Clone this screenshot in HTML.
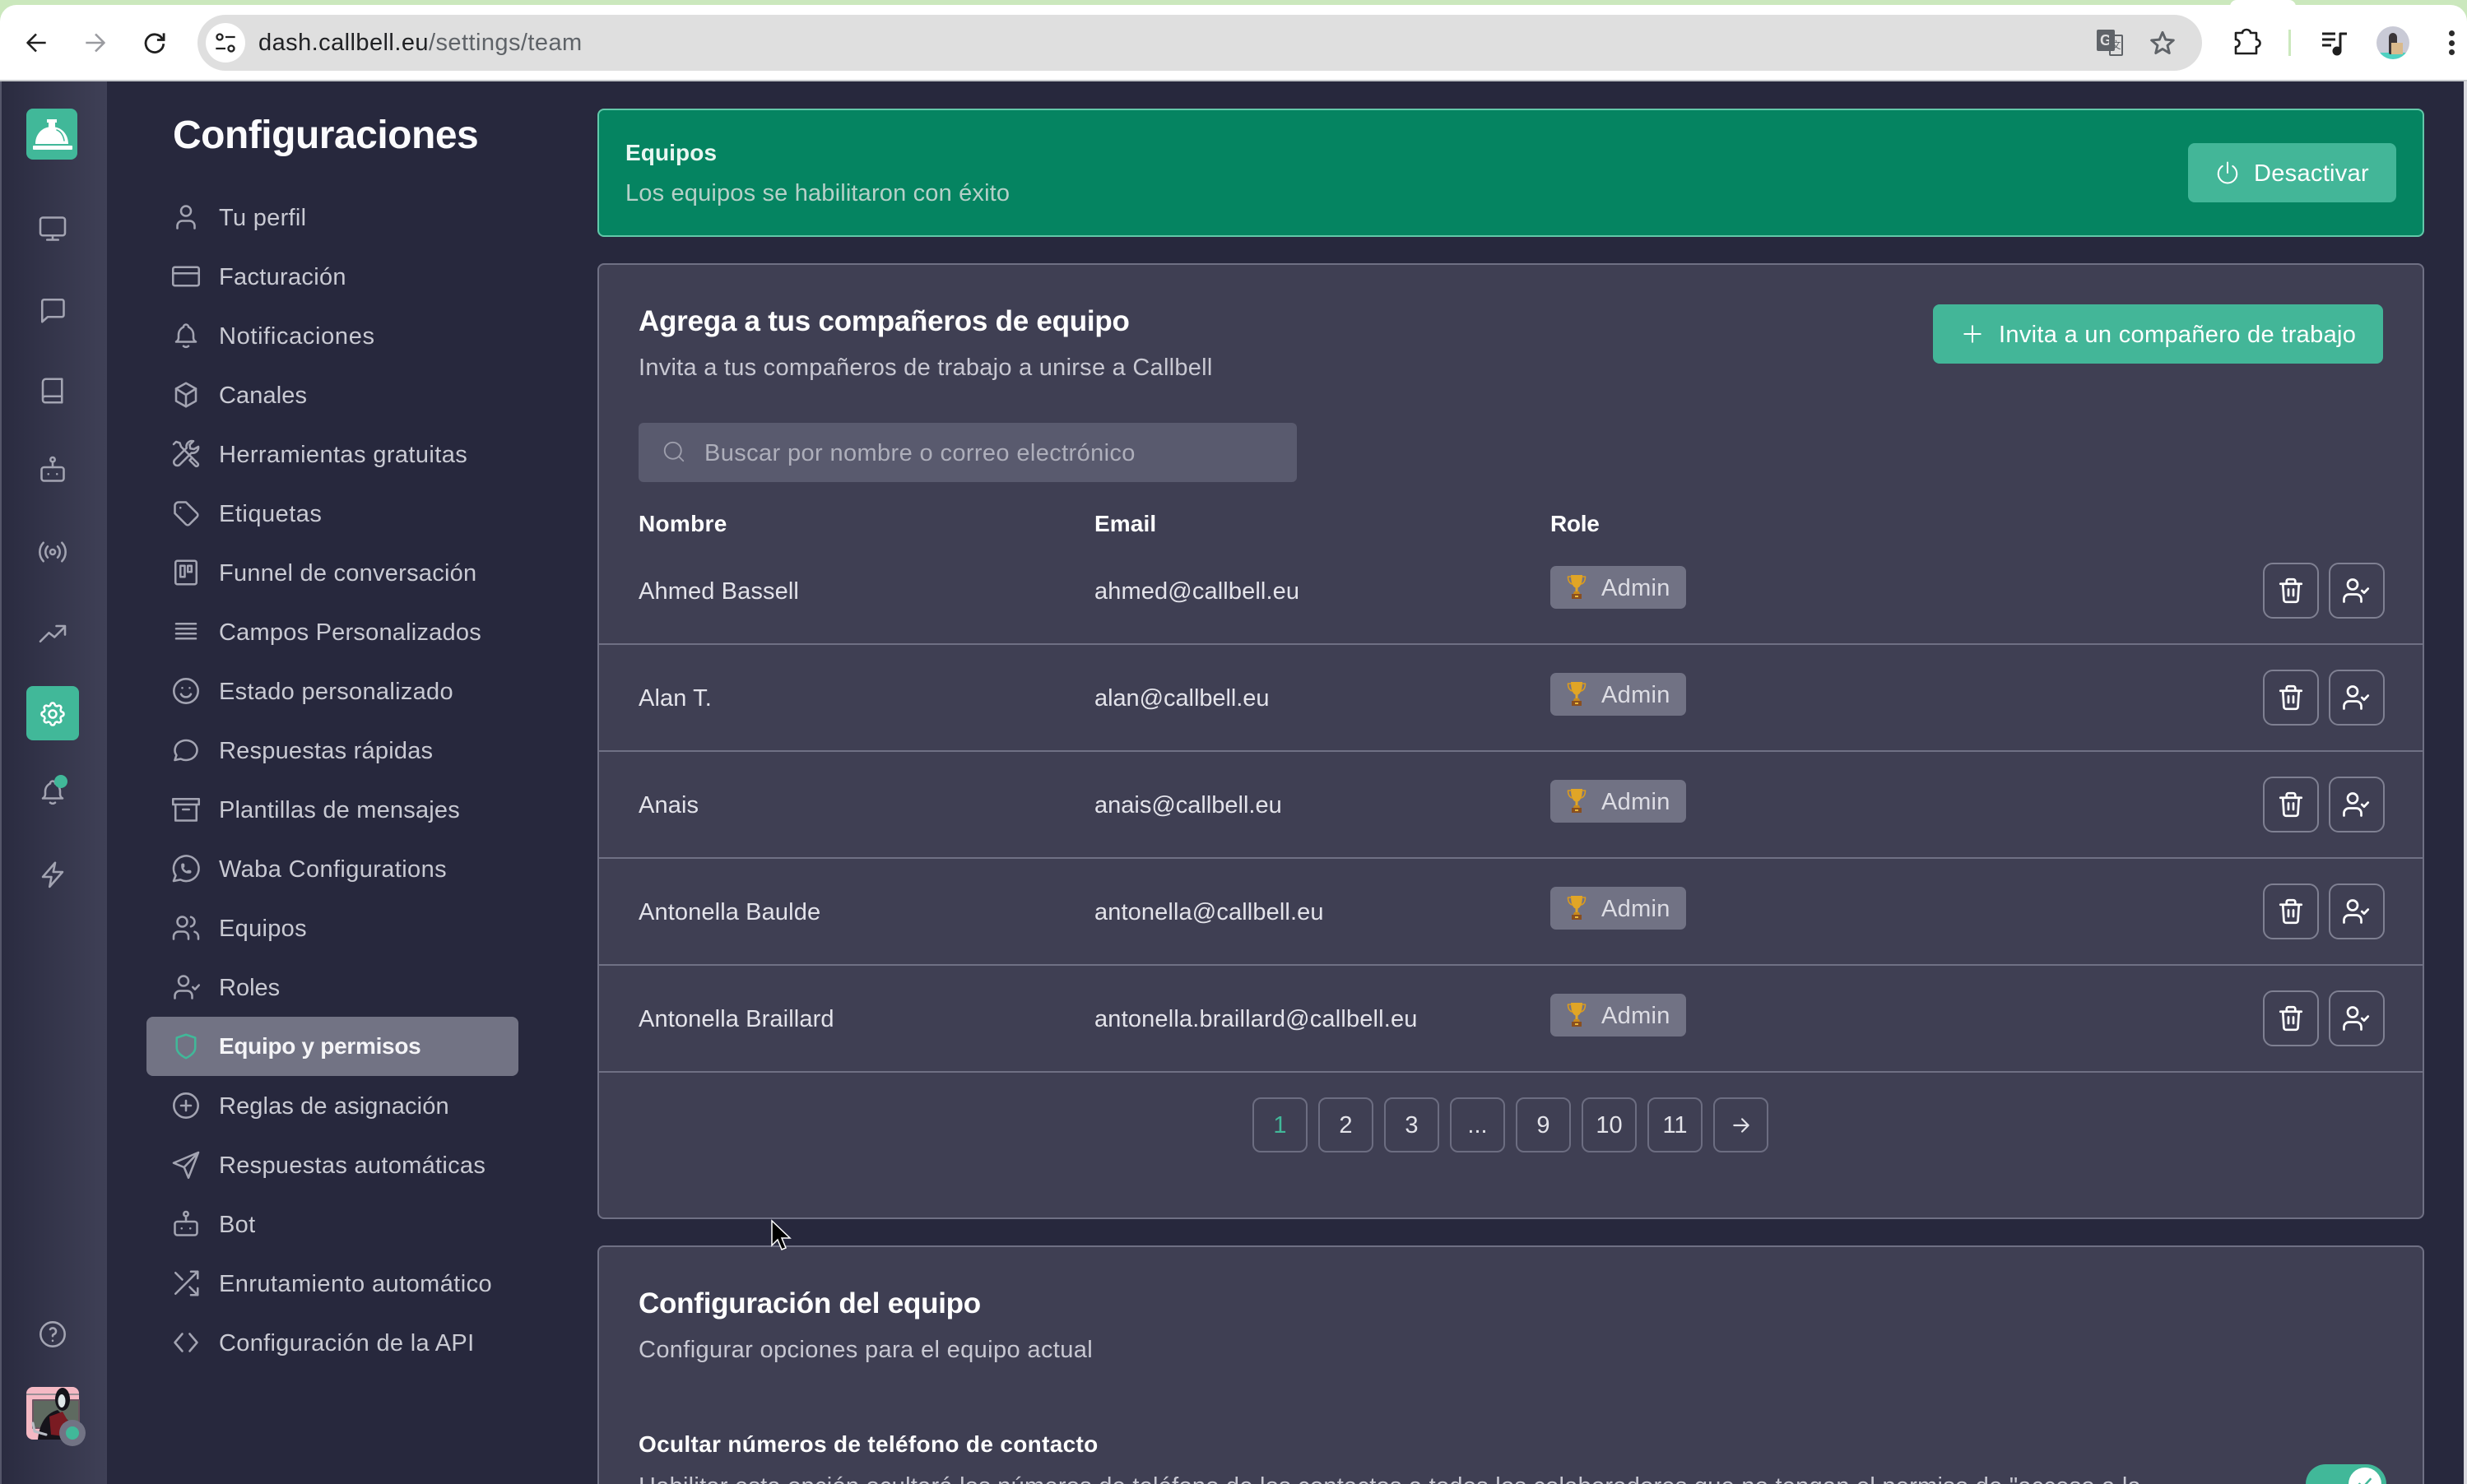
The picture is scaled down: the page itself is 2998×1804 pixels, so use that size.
<!DOCTYPE html>
<html lang="es"><head><meta charset="utf-8"><title>Callbell</title>
<style>
*{box-sizing:border-box}
html,body{margin:0;padding:0;width:2998px;height:1804px;overflow:hidden}
#root{width:2998px;height:1804px;position:relative;overflow:hidden;background:#cbe8bd;font-family:"Liberation Sans",sans-serif;color:#fff}
.t{position:absolute;white-space:nowrap;line-height:40px;font-size:29px;letter-spacing:.3px;margin-top:1px}
.a{position:absolute}
svg{position:absolute;fill:none;stroke:currentColor;stroke-width:1.7;stroke-linecap:round;stroke-linejoin:round;overflow:visible}
.s{color:#c9cad3;left:266px}
.si{color:#a3a4b2;left:208px;width:36px;height:36px}
.ri{color:#a3a4b2;left:46px;width:36px;height:36px;stroke-width:1.7}
.card{position:absolute;left:726px;width:2220px;background:#3f3f53;border:2px solid #6f7084;border-radius:8px}
.hr{position:absolute;left:728px;width:2216px;height:2px;background:#6f7084}
.b{font-weight:700;font-size:28px;letter-spacing:.1px}
.badge{position:absolute;left:1884px;width:165px;height:52px;background:#717284;border-radius:7px}
.btn{position:absolute;width:68px;height:68px;border:2px solid #7f8092;border-radius:12px;color:#fff}
.btn svg{left:14px;top:14px;width:36px;height:36px;stroke-width:1.8}
.btn.u svg{left:12px}
.pg{position:absolute;top:1334px;width:67px;height:67px;border:2px solid #6c6d81;border-radius:10px;display:flex;align-items:center;justify-content:center;font-size:29px;color:#e4e4ea;padding-top:2px}
.cell{color:#e3e3ea;letter-spacing:.12px}
</style></head><body><div id="root">
<svg width="0" height="0" style="position:absolute"><defs>
<symbol id="user" viewBox="0 0 24 24"><circle cx="12" cy="7" r="4"/><path d="M5 21v-2a4 4 0 0 1 4-4h6a4 4 0 0 1 4 4v2"/></symbol>
<symbol id="card" viewBox="0 0 24 24"><rect x="1.500" y="4.500" width="21" height="15" rx="1.500"/><path d="M1.500 9.500h21"/></symbol>
<symbol id="bell" viewBox="0 0 24 24"><path d="M10 5a2 2 0 1 1 4 0a7 7 0 0 1 4 6v3a4 4 0 0 0 2 3h-16a4 4 0 0 0 2-3v-3a7 7 0 0 1 4-6"/><path d="M10 20.500q2 1.500 4 0"/></symbol>
<symbol id="box" viewBox="0 0 24 24"><path d="M12 2.500l8 4.500v10l-8 4.500l-8-4.500v-10z"/><path d="M12 12l8-5M12 12v9.500M12 12l-8-5"/></symbol>
<symbol id="tools" viewBox="0 0 24 24"><path d="M2 4l2-2 3 1 1 3 9 9"/><path d="M15 17l2-2 4.500 4.500a1.400 1.400 0 0 1-2 2z"/><path d="M22 6a4.500 4.500 0 0 1-5.500 5L7 20.500a2.800 2.800 0 0 1-4-4L12.500 7a4.500 4.500 0 0 1 5.500-5.500l-3 3 .5 3 3 .5z"/></symbol>
<symbol id="tag" viewBox="0 0 24 24"><path d="M6 3h6l9 9a2 2 0 0 1 0 2.800l-6.200 6.200a2 2 0 0 1-2.800 0l-9-9v-6a3 3 0 0 1 3-3z"/><path d="M7.500 7.500v.01"/></symbol>
<symbol id="kan" viewBox="0 0 24 24"><rect x="3.500" y="2.500" width="17" height="19" rx="1.500"/><rect x="7.500" y="6.500" width="3.500" height="9"/><rect x="13.500" y="6.500" width="3" height="5"/></symbol>
<symbol id="lines" viewBox="0 0 24 24"><path d="M4 5.500h16M4 9.500h16M4 13.500h16M4 17.500h16"/></symbol>
<symbol id="smile" viewBox="0 0 24 24"><circle cx="12" cy="12" r="9.800"/><path d="M9 9.500v.01M15 9.500v.01M8 14.500a4.500 4.500 0 0 0 8 0"/></symbol>
<symbol id="msg" viewBox="0 0 24 24"><path d="M3 20l1.300-3.900c-2.324-3.437-1.426-7.872 2.100-10.374c3.526-2.501 8.590-2.296 11.845.48c3.255 2.777 3.695 7.266 1.029 10.501c-2.666 3.235-7.615 4.215-11.574 2.293l-4.700 1"/></symbol>
<symbol id="arch" viewBox="0 0 24 24"><path d="M1.500 3.500h21v4.500h-21zM3.500 8v13h17v-13M9.500 12h5"/></symbol>
<symbol id="wa" viewBox="0 0 24 24"><path d="M2 22l1.700-4.500a10.200 10.200 0 1 1 3.800 3.400l-5.500 1.100"/><path d="M9 10a.5.5 0 0 0 1 0v-1a.5.5 0 0 0-1 0v1a5 5 0 0 0 5 5h1a.5.5 0 0 0 0-1h-1a.5.5 0 0 0 0 1"/></symbol>
<symbol id="users" viewBox="0 0 24 24"><circle cx="9" cy="7" r="4"/><path d="M2 21v-2a4 4 0 0 1 4-4h4a4 4 0 0 1 4 4v2M16 3.130a4 4 0 0 1 0 7.750M22 21v-2a4 4 0 0 0-3-3.850"/></symbol>
<symbol id="ucheck" viewBox="0 0 24 24"><circle cx="10" cy="7" r="4"/><path d="M3 21v-2a4 4 0 0 1 4-4h6a4 4 0 0 1 4 4v2M17.500 12l1.800 1.800 3.200-3.400"/></symbol>
<symbol id="shield" viewBox="0 0 24 24"><path d="M12 2.500l7.500 2.500v8c0 4-3.500 6.500-7.500 8.500c-4-2-7.500-4.500-7.500-8.500v-8z"/></symbol>
<symbol id="plusc" viewBox="0 0 24 24"><circle cx="12" cy="12" r="9.800"/><path d="M12 8v8M8 12h8"/></symbol>
<symbol id="send" viewBox="0 0 24 24"><path d="M22 2L2 10.500l8.500 3.500L14 22.500zM22 2L10.500 14"/></symbol>
<symbol id="bot" viewBox="0 0 24 24"><circle cx="12" cy="3.800" r="1.800"/><path d="M12 5.600V10"/><rect x="3" y="10" width="18" height="11" rx="2"/><path d="M8.500 15.500v.01M15.500 15.500v.01"/></symbol>
<symbol id="shuf" viewBox="0 0 24 24"><path d="M16 2.500h5.500V8M3.500 20.500L21.500 2.500M21.500 16v5.500H16M15 15l6.500 6.500M3.500 3.500l5.500 5.500"/></symbol>
<symbol id="code" viewBox="0 0 24 24"><path d="M9 5l-6 7 6 7M15 5l6 7-6 7"/></symbol>
<symbol id="mon" viewBox="0 0 24 24"><rect x="2" y="3" width="20" height="14.500" rx="2"/><path d="M12 17.500v3.500M7.500 21h9"/></symbol>
<symbol id="chat" viewBox="0 0 24 24"><path d="M5 3.500h14.500a1.500 1.500 0 0 1 1.500 1.500v11a1.500 1.500 0 0 1-1.500 1.500H8l-4.500 4V5A1.500 1.500 0 0 1 5 3.500z"/></symbol>
<symbol id="book" viewBox="0 0 24 24"><path d="M6.500 2.500h13v19H6a2 2 0 0 1-2-2V5a2.500 2.500 0 0 1 2.500-2.500zM4 18a1.800 1.800 0 0 1 2-1.500h13.500"/></symbol>
<symbol id="cast" viewBox="0 0 24 24"><circle cx="12" cy="12" r="2"/><path d="M8 7.500a6.500 6.500 0 0 0 0 9M16 7.500a6.500 6.500 0 0 1 0 9M4.500 4.500a11 11 0 0 0 0 15M19.500 4.500a11 11 0 0 1 0 15"/></symbol>
<symbol id="trend" viewBox="0 0 24 24"><path d="M2 18.500l7-7 4.500 3.500 8.500-8.500M15 6h7v7"/></symbol>
<symbol id="gear" viewBox="0 0 24 24"><path d="M10.325 4.317c.426-1.756 2.924-1.756 3.350 0a1.724 1.724 0 0 0 2.573 1.066c1.543-.94 3.310.826 2.370 2.370a1.724 1.724 0 0 0 1.065 2.572c1.756.426 1.756 2.924 0 3.350a1.724 1.724 0 0 0-1.066 2.573c.94 1.543-.826 3.310-2.370 2.370a1.724 1.724 0 0 0-2.572 1.065c-.426 1.756-2.924 1.756-3.350 0a1.724 1.724 0 0 0-2.573-1.066c-1.543.94-3.310-.826-2.370-2.370a1.724 1.724 0 0 0-1.065-2.572c-1.756-.426-1.756-2.924 0-3.350a1.724 1.724 0 0 0 1.066-2.573c-.94-1.543.826-3.310 2.370-2.370c1 .608 2.296.07 2.572-1.065z"/><circle cx="12" cy="12" r="3"/></symbol>
<symbol id="bolt" viewBox="0 0 24 24"><path d="M14 2.500L4 14h7l-1.500 8L20 10h-7.500z"/></symbol>
<symbol id="help" viewBox="0 0 24 24"><circle cx="12" cy="12" r="9.800"/><path d="M12 17.200v.01M12 13.500a1.500 1.500 0 0 1 1-1.500a2.600 2.600 0 1 0-3-4"/></symbol>
<symbol id="trash" viewBox="0 0 24 24"><path d="M3.500 6.500h17M5.500 6.500l.8 13a1.800 1.800 0 0 0 1.800 1.700h7.800a1.800 1.800 0 0 0 1.800-1.700l.8-13M8.500 6.500V4.300A1.500 1.500 0 0 1 10 2.800h4a1.500 1.500 0 0 1 1.500 1.500v2.200M10 11v5M14 11v5"/></symbol>
<symbol id="search" viewBox="0 0 24 24"><circle cx="11" cy="11" r="8"/><path d="M21 21l-4.300-4.300"/></symbol>
<symbol id="power" viewBox="0 0 24 24"><path d="M12 2v10M7 5.500a9 9 0 1 0 10 0"/></symbol>
<symbol id="arrow" viewBox="0 0 24 24"><path d="M4 12h16M13 5l7 7-7 7"/></symbol>
<symbol id="plus" viewBox="0 0 24 24"><path d="M12 3v18M3 12h18"/></symbol>
<symbol id="trophy" viewBox="0 0 24 32"><path d="M5 1h14c0 9-2 14-5.500 15.500v5h-3v-5C7 15 5 10 5 1z" fill="#e0a526" stroke="none"/><path d="M5 3H1.500c0 5 2 8 5 9M19 3h3.500c0 5-2 8-5 9" stroke="#d99a20" stroke-width="1.600"/><path d="M9 21h6l1 3H8z" fill="#c98a1c" stroke="none"/><path d="M6 24h12v6H6z" fill="#8a4f1f" stroke="none"/><path d="M10 26h4v2h-4z" fill="#e8b93a" stroke="none"/></symbol>
</defs></svg>

<!-- browser chrome -->
<div class="a" style="left:0;top:6px;width:2998px;height:93px;background:#fff;border-radius:20px 20px 0 0"></div>
<div class="a" style="left:2710px;top:0;width:80px;height:8px;background:#fff;border-radius:14px 14px 0 0"></div>
<div class="a" style="left:0;top:97px;width:2998px;height:2px;background:#c6c8cc"></div>
<svg style="left:30px;top:38px;width:28px;height:28px;color:#1f1f1f;stroke-width:2.200;stroke-linecap:butt" viewBox="0 0 24 24"><path d="M22 12H3M12 3l-9 9 9 9"/></svg>
<svg style="left:102px;top:38px;width:28px;height:28px;color:#9a9ba0;stroke-width:2.200;stroke-linecap:butt" viewBox="0 0 24 24"><path d="M2 12h19M12 3l9 9-9 9"/></svg>
<svg style="left:174px;top:38px;width:28px;height:28px;color:#1f1f1f;stroke-width:2.400;stroke-linecap:butt" viewBox="0 0 24 24"><path d="M20 8a9.300 9.300 0 1 0 1.200 5"/><path d="M21.500 2v7h-7" stroke-linejoin="miter"/></svg>
<div class="a" style="left:240px;top:18px;width:2436px;height:68px;background:#dfdfdf;border-radius:34px"></div>
<div class="a" style="left:250px;top:28px;width:48px;height:48px;background:#fff;border-radius:24px"></div>
<svg style="left:260px;top:38px;width:28px;height:28px;color:#222;stroke-width:2;stroke-linecap:butt" viewBox="0 0 24 24"><circle cx="6" cy="6" r="3"/><path d="M12 6h10M2 18h10"/><circle cx="18" cy="18" r="3"/></svg>
<div class="t" style="left:314px;top:31px;color:#202124;letter-spacing:.44px">dash.callbell.eu<span style="color:#5f6368">/settings/team</span></div>
<!-- translate -->
<div class="a" style="left:2548px;top:36px;width:22px;height:26px;background:#5f6368;border-radius:2px;font-size:18px;font-weight:700;line-height:26px;text-align:center;color:#dfdfdf">G</div>
<div class="a" style="left:2563px;top:42px;width:17px;height:26px;border:2px solid #5f6368;border-radius:2px;font-size:12px;line-height:22px;text-align:center;color:#5f6368;font-family:'Noto Sans CJK SC',sans-serif">文</div>
<svg style="left:2612px;top:36px;width:32px;height:32px;color:#5f6368;stroke-width:2.200;stroke-linecap:butt" viewBox="0 0 24 24"><path d="M12 2.500l2.800 6.600 7.200.6-5.500 4.700 1.700 7-6.200-3.800-6.200 3.800 1.700-7L2 9.700l7.200-.6z"/></svg>
<svg style="left:2712px;top:34px;width:36px;height:34px;color:#1f1f1f;stroke-width:2.600;stroke-linecap:butt" viewBox="0 0 36 34"><path d="M5 6h8a5 4 0 0 1 10 0h7v8a4.500 4.500 0 0 1 0 9v8H5v-8a4.500 4.500 0 0 0 0-9z"/></svg>
<div class="a" style="left:2781px;top:36px;width:3px;height:32px;background:#cbe8bd"></div>
<svg style="left:2822px;top:38px;width:30px;height:28px;color:#1f1f1f;stroke-width:3;stroke-linecap:butt" viewBox="0 0 30 28"><path d="M0 3h16M0 10h16M0 17h11M22 24V3h8"/><circle cx="18" cy="24" r="4" fill="#1f1f1f"/></svg>
<div class="a" style="left:2888px;top:32px;width:40px;height:40px;border-radius:20px;background:linear-gradient(#c9cad6 0 80%,#4fd1c1 80%);overflow:hidden"><div class="a" style="left:15px;top:8px;width:10px;height:26px;background:#3a3538;border-radius:5px 5px 2px 2px"></div><div class="a" style="left:18px;top:20px;width:14px;height:14px;background:#d9b98c"></div></div>
<div class="a" style="left:2976px;top:37px;width:7px;height:7px;background:#2b2b2b;border-radius:50%"></div>
<div class="a" style="left:2976px;top:49px;width:7px;height:7px;background:#2b2b2b;border-radius:50%"></div>
<div class="a" style="left:2976px;top:60px;width:7px;height:7px;background:#2b2b2b;border-radius:50%"></div>

<!-- app background -->
<div class="a" style="left:0;top:99px;width:2998px;height:1705px;background:#27283d"></div>
<div class="a" style="left:2994px;top:99px;width:4px;height:1705px;background:#d9d9de"></div>
<div class="a" style="left:0;top:99px;width:2px;height:1705px;background:#55566a"></div>
<div class="a" style="left:2px;top:99px;width:128px;height:1705px;background:linear-gradient(90deg,#2a2b40,#3f4056)"></div>

<!-- rail -->
<div class="a" style="left:32px;top:132px;width:62px;height:62px;background:#41b899;border-radius:8px"></div>
<svg style="left:32px;top:132px;width:62px;height:62px" viewBox="0 0 62 62"><path d="M11 43c0-11 7-19 16-20.500V17h-2v-4h12v4h-2v5.500C44 24 51 32 51 43z" fill="#fff" stroke="none"/><rect x="8" y="45" width="48" height="5" rx="1" fill="#fff" stroke="none"/><path d="M37 26c5 2 8 7 9 13" stroke="#41b899" stroke-width="1.500"/></svg>
<svg class="ri" style="top:260px"><use href="#mon"/></svg>
<svg class="ri" style="top:359px"><use href="#chat"/></svg>
<svg class="ri" style="top:457px"><use href="#book"/></svg>
<svg class="ri" style="top:553px"><use href="#bot"/></svg>
<svg class="ri" style="top:653px"><use href="#cast"/></svg>
<svg class="ri" style="top:752px"><use href="#trend"/></svg>
<div class="a" style="left:32px;top:834px;width:64px;height:66px;background:#41b899;border-radius:8px"></div>
<svg class="ri" style="top:850px;color:#fff"><use href="#gear"/></svg>
<svg class="ri" style="top:945px"><use href="#bell"/></svg>
<div class="a" style="left:66px;top:942px;width:16px;height:16px;background:#41b899;border-radius:50%"></div>
<svg class="ri" style="top:1045px"><use href="#bolt"/></svg>
<svg class="ri" style="top:1604px"><use href="#help"/></svg>
<!-- avatar -->
<svg style="left:32px;top:1686px;width:64px;height:64px;stroke:none" viewBox="0 0 64 64"><rect width="64" height="64" rx="8" fill="#f5b9c4"/><rect x="0" y="8" width="64" height="2" fill="#9a8f96"/><rect x="8" y="16" width="56" height="34" fill="#5e6a60" stroke="#6a5560" stroke-width="2"/><path d="M14 64c2-20 10-32 24-36l14 14-6 22z" fill="#15131a"/><path d="M28 36l16-6 8 14-6 16-16-2z" fill="#7a1b22"/><ellipse cx="44" cy="15" rx="9" ry="14" fill="#15131a"/><ellipse cx="43" cy="17" rx="4.500" ry="8" fill="#dfe6e8"/><path d="M8 44l2 10 14 4" fill="none" stroke="#b8bcc4" stroke-width="3"/></svg>
<div class="a" style="left:72px;top:1726px;width:32px;height:32px;background:#727384;border-radius:50%"></div>
<div class="a" style="left:80px;top:1734px;width:16px;height:16px;background:#41b899;border-radius:50%"></div>

<!-- sidebar -->
<div class="t" style="left:210px;top:144px;font-size:48px;font-weight:700;letter-spacing:-.5px;line-height:40px;color:#fbfbfd">Configuraciones</div>
<svg class="si" style="top:246px"><use href="#user"/></svg><div class="t s" style="top:244px">Tu perfil</div>
<svg class="si" style="top:318px"><use href="#card"/></svg><div class="t s" style="top:316px">Facturación</div>
<svg class="si" style="top:390px"><use href="#bell"/></svg><div class="t s" style="top:388px;letter-spacing:.65px">Notificaciones</div>
<svg class="si" style="top:462px"><use href="#box"/></svg><div class="t s" style="top:460px;letter-spacing:.1px">Canales</div>
<svg class="si" style="top:534px"><use href="#tools"/></svg><div class="t s" style="top:532px;letter-spacing:.4px">Herramientas gratuitas</div>
<svg class="si" style="top:606px"><use href="#tag"/></svg><div class="t s" style="top:604px;letter-spacing:.5px">Etiquetas</div>
<svg class="si" style="top:678px"><use href="#kan"/></svg><div class="t s" style="top:676px;letter-spacing:.25px">Funnel de conversación</div>
<svg class="si" style="top:750px"><use href="#lines"/></svg><div class="t s" style="top:748px;letter-spacing:.22px">Campos Personalizados</div>
<svg class="si" style="top:822px"><use href="#smile"/></svg><div class="t s" style="top:820px;letter-spacing:.3px">Estado personalizado</div>
<svg class="si" style="top:894px"><use href="#msg"/></svg><div class="t s" style="top:892px;letter-spacing:.22px">Respuestas rápidas</div>
<svg class="si" style="top:966px"><use href="#arch"/></svg><div class="t s" style="top:964px;letter-spacing:.2px">Plantillas de mensajes</div>
<svg class="si" style="top:1038px"><use href="#wa"/></svg><div class="t s" style="top:1036px;letter-spacing:.38px">Waba Configurations</div>
<svg class="si" style="top:1110px"><use href="#users"/></svg><div class="t s" style="top:1108px">Equipos</div>
<svg class="si" style="top:1182px"><use href="#ucheck"/></svg><div class="t s" style="top:1180px;letter-spacing:0">Roles</div>
<div class="a" style="left:178px;top:1236px;width:452px;height:72px;background:#727384;border-radius:8px"></div>
<svg class="si" style="top:1254px;color:#41b899"><use href="#shield"/></svg><div class="t" style="left:266px;top:1251px;font-size:28px;font-weight:700;letter-spacing:-.3px;color:#f4f4f7">Equipo y permisos</div>
<svg class="si" style="top:1326px"><use href="#plusc"/></svg><div class="t s" style="top:1324px;letter-spacing:.12px">Reglas de asignación</div>
<svg class="si" style="top:1398px"><use href="#send"/></svg><div class="t s" style="top:1396px">Respuestas automáticas</div>
<svg class="si" style="top:1470px"><use href="#bot"/></svg><div class="t s" style="top:1468px">Bot</div>
<svg class="si" style="top:1542px"><use href="#shuf"/></svg><div class="t s" style="top:1540px;letter-spacing:.42px">Enrutamiento automático</div>
<svg class="si" style="top:1614px"><use href="#code"/></svg><div class="t s" style="top:1612px;letter-spacing:.32px">Configuración de la API</div>

<!-- alert -->
<div class="a" style="left:726px;top:132px;width:2220px;height:156px;background:#058461;border:2px solid #62c8a9;border-radius:8px"></div>
<div class="t b" style="left:760px;top:165px;color:#e9f6f1">Equipos</div>
<div class="t" style="left:760px;top:214px;color:#b6d0c8;letter-spacing:.17px">Los equipos se habilitaron con éxito</div>
<div class="a" style="left:2659px;top:174px;width:253px;height:72px;background:#43b698;border-radius:8px"></div>
<svg style="left:2692px;top:195px;width:30px;height:30px;color:#fff;stroke-width:1.600" viewBox="0 0 24 24"><use href="#power"/></svg>
<div class="t" style="left:2739px;top:190px;color:#fff">Desactivar</div>

<!-- team card -->
<div class="card" style="top:320px;height:1162px"></div>
<div class="t" style="left:776px;top:370px;font-size:35px;font-weight:700;letter-spacing:-.25px">Agrega a tus compañeros de equipo</div>
<div class="t" style="left:776px;top:426px;color:#c8c8d2;letter-spacing:.26px">Invita a tus compañeros de trabajo a unirse a Callbell</div>
<div class="a" style="left:2349px;top:370px;width:547px;height:72px;background:#43b698;border-radius:8px"></div>
<svg style="left:2384px;top:393px;width:26px;height:26px;color:#fff;stroke-width:1.800" viewBox="0 0 24 24"><use href="#plus"/></svg>
<div class="t" style="left:2429px;top:386px;color:#fff;letter-spacing:.32px">Invita a un compañero de trabajo</div>
<div class="a" style="left:776px;top:514px;width:800px;height:72px;background:#595a6e;border-radius:6px"></div>
<svg style="left:804px;top:534px;width:30px;height:30px;color:#9d9eac;stroke-width:1.500" viewBox="0 0 24 24"><use href="#search"/></svg>
<div class="t" style="left:856px;top:530px;color:#aeafbb;letter-spacing:.38px">Buscar por nombre o correo electrónico</div>
<div class="t b" style="left:776px;top:616px;letter-spacing:.3px">Nombre</div>
<div class="t b" style="left:1330px;top:616px">Email</div>
<div class="t b" style="left:1884px;top:616px;letter-spacing:-.3px">Role</div>

<div class="t cell" style="left:776px;top:698px">Ahmed Bassell</div><div class="t cell" style="left:1330px;top:698px">ahmed@callbell.eu</div>
<div class="badge" style="top:688px"></div><svg style="left:1904px;top:698px;width:24px;height:32px;stroke:none;fill:none;stroke-width:1" viewBox="0 0 24 32"><use href="#trophy"/></svg><div class="t" style="left:1946px;top:694px;color:#dddde4">Admin</div>
<div class="btn" style="left:2750px;top:684px"><svg><use href="#trash"/></svg></div><div class="btn u" style="left:2830px;top:684px"><svg><use href="#ucheck"/></svg></div>
<div class="hr" style="top:782px"></div>

<div class="t cell" style="left:776px;top:828px">Alan T.</div><div class="t cell" style="left:1330px;top:828px;letter-spacing:-.05px">alan@callbell.eu</div>
<div class="badge" style="top:818px"></div><svg style="left:1904px;top:828px;width:24px;height:32px;stroke:none;fill:none;stroke-width:1" viewBox="0 0 24 32"><use href="#trophy"/></svg><div class="t" style="left:1946px;top:824px;color:#dddde4">Admin</div>
<div class="btn" style="left:2750px;top:814px"><svg><use href="#trash"/></svg></div><div class="btn u" style="left:2830px;top:814px"><svg><use href="#ucheck"/></svg></div>
<div class="hr" style="top:912px"></div>

<div class="t cell" style="left:776px;top:958px">Anais</div><div class="t cell" style="left:1330px;top:958px;letter-spacing:0">anais@callbell.eu</div>
<div class="badge" style="top:948px"></div><svg style="left:1904px;top:958px;width:24px;height:32px;stroke:none;fill:none;stroke-width:1" viewBox="0 0 24 32"><use href="#trophy"/></svg><div class="t" style="left:1946px;top:954px;color:#dddde4">Admin</div>
<div class="btn" style="left:2750px;top:944px"><svg><use href="#trash"/></svg></div><div class="btn u" style="left:2830px;top:944px"><svg><use href="#ucheck"/></svg></div>
<div class="hr" style="top:1042px"></div>

<div class="t cell" style="left:776px;top:1088px">Antonella Baulde</div><div class="t cell" style="left:1330px;top:1088px">antonella@callbell.eu</div>
<div class="badge" style="top:1078px"></div><svg style="left:1904px;top:1088px;width:24px;height:32px;stroke:none;fill:none;stroke-width:1" viewBox="0 0 24 32"><use href="#trophy"/></svg><div class="t" style="left:1946px;top:1084px;color:#dddde4">Admin</div>
<div class="btn" style="left:2750px;top:1074px"><svg><use href="#trash"/></svg></div><div class="btn u" style="left:2830px;top:1074px"><svg><use href="#ucheck"/></svg></div>
<div class="hr" style="top:1172px"></div>

<div class="t cell" style="left:776px;top:1218px">Antonella Braillard</div><div class="t cell" style="left:1330px;top:1218px;letter-spacing:.17px">antonella.braillard@callbell.eu</div>
<div class="badge" style="top:1208px"></div><svg style="left:1904px;top:1218px;width:24px;height:32px;stroke:none;fill:none;stroke-width:1" viewBox="0 0 24 32"><use href="#trophy"/></svg><div class="t" style="left:1946px;top:1214px;color:#dddde4">Admin</div>
<div class="btn" style="left:2750px;top:1204px"><svg><use href="#trash"/></svg></div><div class="btn u" style="left:2830px;top:1204px"><svg><use href="#ucheck"/></svg></div>
<div class="hr" style="top:1302px"></div>

<!-- pagination -->
<div class="pg" style="left:1522px;color:#41b899">1</div>
<div class="pg" style="left:1602px">2</div>
<div class="pg" style="left:1682px">3</div>
<div class="pg" style="left:1762px">...</div>
<div class="pg" style="left:1842px">9</div>
<div class="pg" style="left:1922px">10</div>
<div class="pg" style="left:2002px">11</div>
<div class="pg" style="left:2082px"><svg style="left:19px;top:19px;width:26px;height:26px;color:#e4e4ea;stroke-width:2" viewBox="0 0 24 24"><use href="#arrow"/></svg></div>

<!-- config card: ends exactly at the frame edge, contents clipped inside -->
<div class="card" style="top:1514px;height:290px;border-bottom:0;border-radius:8px 8px 0 0;overflow:hidden">
<div class="t" style="left:48px;top:48px;font-size:35px;font-weight:700;letter-spacing:-.25px">Configuración del equipo</div>
<div class="t" style="left:48px;top:104px;color:#c8c8d2;letter-spacing:.37px">Configurar opciones para el equipo actual</div>
<div class="t b" style="left:48px;top:219px;letter-spacing:.32px">Ocultar números de teléfono de contacto</div>
<div class="t" style="left:48px;top:270px;color:#c8c8d2;letter-spacing:.26px">Habilitar esta opción ocultará los números de teléfono de los contactos a todos los colaboradores que no tengan el permiso de "acceso a la</div>
<div class="a" style="left:2074px;top:264px;width:98px;height:48px;background:#41b899;border-radius:24px"></div>
<div class="a" style="left:2126px;top:268px;width:40px;height:40px;background:#fff;border-radius:50%"></div>
<svg style="left:2136px;top:277px;width:20px;height:20px;color:#41b899;stroke-width:3" viewBox="0 0 24 24"><path d="M4 13l5 5 11-12"/></svg>
</div>

<!-- cursor -->
<svg style="left:937px;top:1483px;width:24px;height:37px;stroke:#fff;stroke-width:1.500;fill:#000;stroke-linejoin:miter" viewBox="0 0 24 37"><path d="M1 1v30l7-7 5 12 5-2-5-12h10z"/></svg>
</div></body></html>
